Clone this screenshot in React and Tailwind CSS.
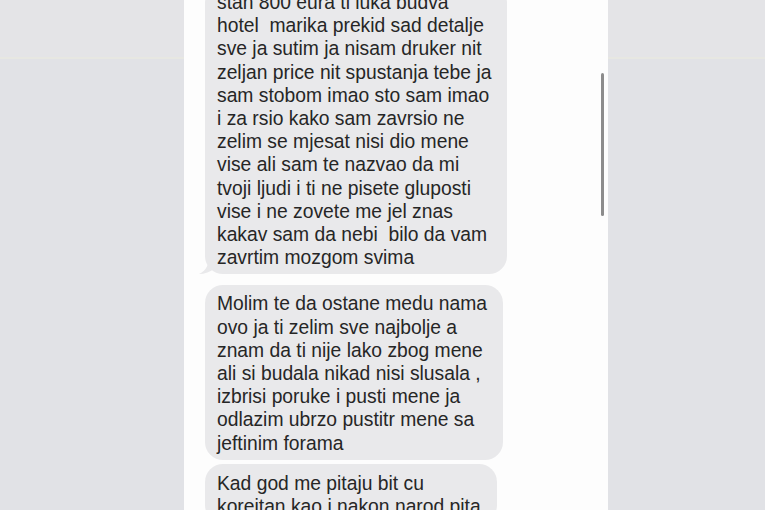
import React from "react";

const b1 = [
  "stan 800 eura ti luka budva",
  "hotel  marika prekid sad detalje",
  "sve ja sutim ja nisam druker nit",
  "zeljan price nit spustanja tebe ja",
  "sam stobom imao sto sam imao",
  "i za rsio kako sam zavrsio ne",
  "zelim se mjesat nisi dio mene",
  "vise ali sam te nazvao da mi",
  "tvoji ljudi i ti ne pisete gluposti",
  "vise i ne zovete me jel znas",
  "kakav sam da nebi  bilo da vam",
  "zavrtim mozgom svima",
];
const b2 = [
  "Molim te da ostane medu nama",
  "ovo ja ti zelim sve najbolje a",
  "znam da ti nije lako zbog mene",
  "ali si budala nikad nisi slusala ,",
  "izbrisi poruke i pusti mene ja",
  "odlazim ubrzo pustitr mene sa",
  "jeftinim forama",
];
const b3 = ["Kad god me pitaju bit cu", "koreitan kao i nakon narod pita"];

function Lines({ lines }) {
  return lines.map((l, i) => (
    <div key={i} className="whitespace-pre">
      {l}
    </div>
  ));
}

export default function App() {
  return (
    <div
      className="flex h-[510px] w-[765px] overflow-hidden bg-[#e1e2e6]"
      style={{ fontFamily: '"Liberation Sans", Arial, sans-serif' }}
    >
      <div className="flex w-[184px] shrink-0 flex-col">
        <div className="h-[57px] bg-[#e4e4e7]" />
        <div className="h-[2px] bg-[#e7e7e2]" />
        <div className="flex-1 bg-[#e1e2e6]" />
      </div>
      <div className="relative w-[424px] shrink-0 bg-[#fdfdfd]">
        <div className="mt-[-15px] ml-[21px] flex flex-col items-start text-[19.3px] leading-[23.2px] text-[#262626]">
          <div className="relative w-[302px] rounded-[18px] bg-[#e9e9eb] pl-[12px] pt-[6px] pb-[5px]">
            <Lines lines={b1} />
            <svg
              className="absolute bottom-0 left-[-6px]"
              width="16"
              height="18"
              viewBox="0 0 16 18"
            >
              <path d="M10 0 C10 8 8 14 0 18 C6 18 11 16 16 12 L16 0 Z" fill="#e9e9eb" />
            </svg>
          </div>
          <div className="mt-[11px] w-[298px] rounded-[18px] bg-[#e9e9eb] pl-[12px] pt-[7px] pb-[5px]">
            <Lines lines={b2} />
          </div>
          <div className="mt-[4px] w-[292px] rounded-[18px] bg-[#e9e9eb] pl-[12px] pt-[8px] pb-[5px]">
            <Lines lines={b3} />
          </div>
        </div>
        <div className="absolute left-[417px] top-[73px] h-[143px] w-[3px] rounded-full bg-[#8c8c8c]" />
      </div>
      <div className="flex flex-1 flex-col">
        <div className="h-[57px] bg-[#e4e4e7]" />
        <div className="h-[2px] bg-[#e7e7e2]" />
        <div className="flex-1 bg-[#e1e2e6]" />
      </div>
    </div>
  );
}
